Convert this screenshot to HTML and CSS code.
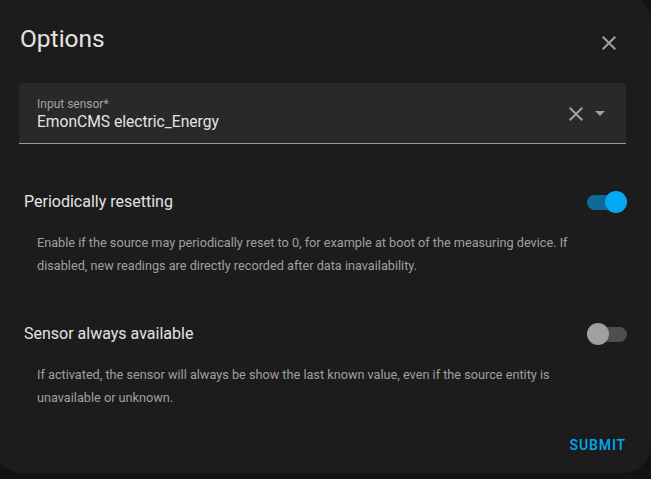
FILE: index.html
```html
<!DOCTYPE html>
<html lang="en">
<head>
<meta charset="utf-8">
<title>Options</title>
<link rel="stylesheet" href="styles.css">
</head>
<body>
<div class="dialog">
  <div class="header">
    <h2 class="title">Options</h2>
    <button class="icon-btn close" aria-label="Close">
      <svg viewBox="0 0 24 24" width="24" height="24"><path d="M19,6.41L17.59,5L12,10.59L6.41,5L5,6.41L10.59,12L5,17.59L6.41,19L12,13.41L17.59,19L19,17.59L13.41,12L19,6.41Z"/></svg>
    </button>
  </div>

  <div class="field">
    <div class="field-text">
      <div class="field-label">Input sensor*</div>
      <div class="field-value">EmonCMS electric_Energy</div>
    </div>
    <div class="field-icons">
      <svg class="clear" viewBox="0 0 24 24" width="24" height="24"><path d="M19,6.41L17.59,5L12,10.59L6.41,5L5,6.41L10.59,12L5,17.59L6.41,19L12,13.41L17.59,19L19,17.59L13.41,12L19,6.41Z"/></svg>
      <svg class="arrow" viewBox="0 0 24 24" width="24" height="24"><path d="M7,10L12,15L17,10H7Z"/></svg>
    </div>
  </div>

  <div class="row first">
    <div class="row-title">Periodically resetting</div>
    <div class="switch on"><span class="track"></span><span class="knob"></span></div>
  </div>
  <p class="desc">Enable if the source may periodically reset to 0, for example at boot of the measuring device. If disabled, new readings are directly recorded after data inavailability.</p>

  <div class="row second">
    <div class="row-title">Sensor always available</div>
    <div class="switch"><span class="track"></span><span class="knob"></span></div>
  </div>
  <p class="desc">If activated, the sensor will always be show the last known value, even if the source entity is unavailable or unknown.</p>

  <div class="actions">
    <button class="submit">SUBMIT</button>
  </div>
</div>
</body>
</html>
```

FILE: styles.css
```css
html, body {
  margin: 0;
  padding: 0;
  background: #131313;
  height: 100%;
  overflow: hidden;
}

body {
  font-family: Roboto, "Liberation Sans", sans-serif;
  color: #e1e1e1;
}

.dialog {
  box-sizing: border-box;
  margin: -7px 0 0 -7px;
  width: 658px;
  height: 480px;
  padding: 7px 0 0 7px;
  background: #1c1c1c;
  border-radius: 28px;
  display: flex;
  flex-direction: column;
}

.header {
  display: flex;
  justify-content: space-between;
  align-items: flex-start;
  margin: 25px 30px 0 20px;
  height: 28px;
}

.title {
  margin: 0;
  font-size: 24.5px;
  line-height: 28px;
  font-weight: 400;
  color: #e3e3e3;
}

.icon-btn {
  background: none;
  border: 0;
  padding: 0;
  margin-top: 6px;
  width: 24px;
  height: 24px;
  display: block;
}

.icon-btn svg, .field-icons svg {
  display: block;
  fill: #a0a0a0;
}

.field {
  box-sizing: border-box;
  margin: 30px 0 0 19px;
  width: 607px;
  height: 61px;
  background: #292929;
  border-radius: 4px 4px 0 0;
  border-bottom: 1px solid #9a9a9a;
  display: flex;
  padding: 0 14px 0 18px;
}

.field-text {
  flex: 1;
  padding-top: 14px;
}

.field-label {
  font-size: 12px;
  line-height: 14px;
  color: #a3a3a3;
}

.field-value {
  font-size: 15.6px;
  line-height: 20px;
  margin-top: 1px;
  color: #e3e3e3;
}

.field-icons {
  display: flex;
  align-items: center;
}

.field-icons .clear {
  margin-top: 2px;
}

.row {
  display: flex;
  justify-content: space-between;
  align-items: center;
  margin: 46px 0 0 24px;
  width: 603px;
  height: 24px;
}

.row.second {
  margin-top: 45px;
}

.row-title {
  font-size: 16px;
  line-height: 24px;
  color: #e3e3e3;
}

.switch {
  position: relative;
  width: 40px;
  height: 22px;
}

.switch .track {
  position: absolute;
  left: 0;
  top: 4px;
  width: 40px;
  height: 15px;
  border-radius: 8px;
  background: #4e4e4e;
}

.switch .knob {
  position: absolute;
  left: 0;
  top: 0;
  width: 22px;
  height: 22px;
  border-radius: 50%;
  background: #a0a0a0;
}

.switch.on .track {
  width: 36px;
  background: #106a99;
}

.switch.on .knob {
  left: 18px;
  background: #03a9f4;
}

.desc {
  margin: 18px 0 0 37px;
  width: 560px;
  font-size: 12.7px;
  line-height: 22.5px;
  color: #a0a0a0;
}

.actions {
  margin-top: auto;
  display: flex;
  justify-content: flex-end;
  padding: 0 25px 20px 0;
}

.submit {
  background: none;
  border: 0;
  padding: 0;
  font-family: Roboto, "Liberation Sans", sans-serif;
  font-size: 14px;
  line-height: 16px;
  font-weight: 500;
  letter-spacing: 0.9px;
  color: #03a9f4;
}
```
